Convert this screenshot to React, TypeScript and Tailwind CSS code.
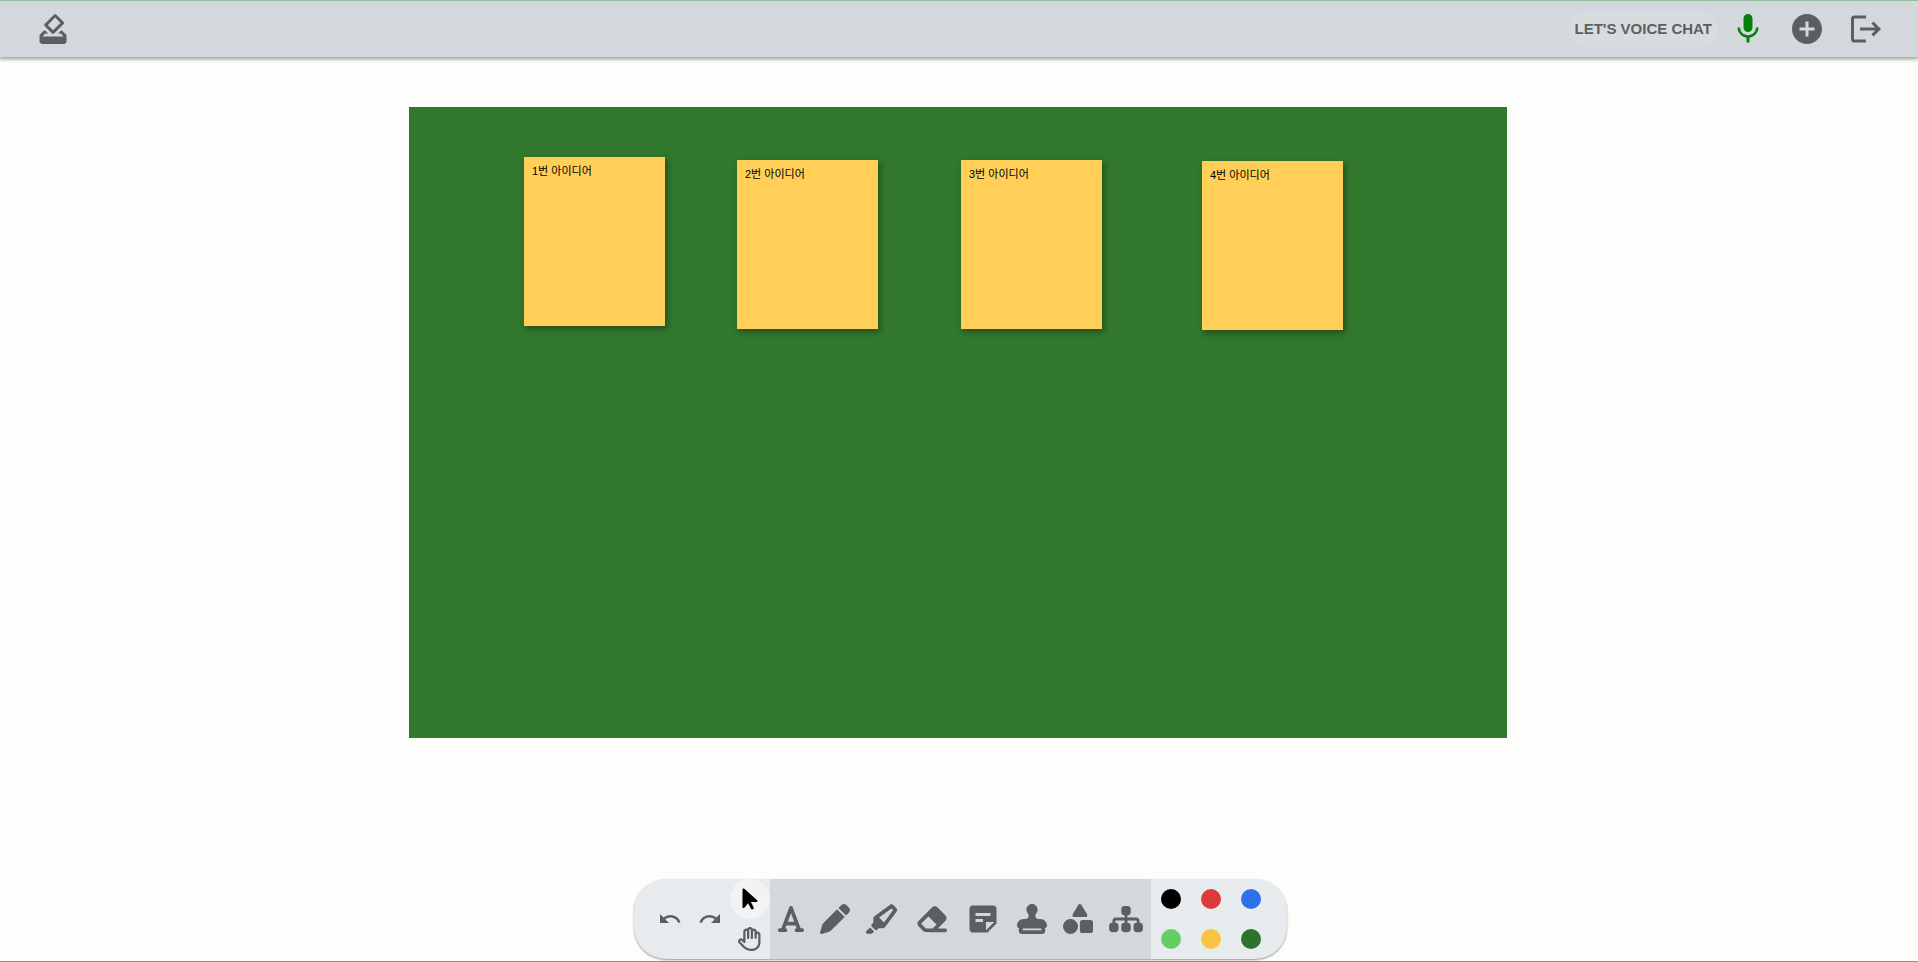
import { FaArrowPointer, FaEraser, FaFont, FaHighlighter, FaPen, FaRegHand, FaShapes, FaSitemap, FaStamp } from "react-icons/fa6";
import { MdAddCircle, MdHowToVote, MdLogout, MdMic, MdRedo, MdStickyNote2, MdUndo } from "react-icons/md";

const notes = [
  { text: "1번 아이디어", place: "left-[115px] top-[50px]" },
  { text: "2번 아이디어", place: "left-[328px] top-[53px]" },
  { text: "3번 아이디어", place: "left-[552px] top-[53px]" },
  { text: "4번 아이디어", place: "left-[793px] top-[54px]" },
];

const tools = [
  { label: "Text", Icon: FaFont, size: "h-[30px] w-[26px]" },
  { label: "Pen", Icon: FaPen, size: "h-[30px] w-[30px]" },
  { label: "Highlighter", Icon: FaHighlighter, size: "h-[30px] w-[33px]" },
  { label: "Eraser", Icon: FaEraser, size: "h-[30px] w-[34px]" },
  { label: "Sticky note", Icon: MdStickyNote2, size: "h-[36px] w-[36px]" },
  { label: "Stamp", Icon: FaStamp, size: "h-[30px] w-[30px]" },
  { label: "Shapes", Icon: FaShapes, size: "h-[30px] w-[30px]" },
  { label: "Mind map", Icon: FaSitemap, size: "h-[30px] w-[34px]" },
];

const colors = [
  { label: "Black", fill: "bg-black" },
  { label: "Red", fill: "bg-[#df3a3a]" },
  { label: "Blue", fill: "bg-[#2f6fea]" },
  { label: "Light green", fill: "bg-[#65cd65]" },
  { label: "Yellow", fill: "bg-[#f5c440]" },
  { label: "Green", fill: "bg-[#2b752b]" },
];

function Header() {
  return (
    <header className="flex h-[57px] shrink-0 items-center justify-between border-t border-[#8fbfa0] bg-[#d3d8dd] pr-[34px] pl-[35px] text-[#5c5f62] shadow-[0_1px_4px_1px_rgba(0,0,0,0.4)]">
      <button type="button" aria-label="Vote">
        <MdHowToVote className="size-9" />
      </button>
      <div className="flex items-center">
        <button type="button" className="mr-3 h-9 rounded-full bg-[#d8dcdf] px-[6px] text-[15px] font-bold">
          LET'S VOICE CHAT
        </button>
        <button type="button" aria-label="Microphone" className="mr-[23px] text-[#0a800a]">
          <MdMic className="size-9" />
        </button>
        <button type="button" aria-label="Add" className="mr-[23px]">
          <MdAddCircle className="size-9" />
        </button>
        <button type="button" aria-label="Leave">
          <MdLogout className="size-9" />
        </button>
      </div>
    </header>
  );
}

function Board() {
  return (
    <section className="relative h-[631px] w-[1098px] bg-[#31772c]">
      {notes.map((note) => (
        <article
          key={note.text}
          className={`absolute h-[169px] w-[141px] bg-[#ffcf58] px-2 py-[6px] text-[11px] leading-4 text-black shadow-[2px_3px_6px_rgba(0,0,0,0.35)] ${note.place}`}
        >
          {note.text}
        </article>
      ))}
    </section>
  );
}

function Toolbar() {
  return (
    <div className="absolute inset-x-0 bottom-0 flex justify-center border-b border-[#8d8f94] pb-[2px] pl-[3px]">
      <div className="flex h-20 overflow-hidden rounded-[32px] bg-[#e8ebed] text-[#5c5f62] shadow-[0_1px_2px_rgba(0,0,0,0.4)]">
        <div className="flex items-center pl-4">
          <button type="button" aria-label="Undo" className="flex size-10 items-center justify-center">
            <MdUndo className="size-6" />
          </button>
          <button type="button" aria-label="Redo" className="flex size-10 items-center justify-center">
            <MdRedo className="size-6" />
          </button>
          <div className="flex flex-col">
            <button type="button" aria-label="Select" className="flex size-10 items-center justify-center rounded-full bg-[#f1f3f4] text-black">
              <FaArrowPointer className="size-6" />
            </button>
            <button type="button" aria-label="Move" className="flex size-10 items-center justify-center">
              <FaRegHand className="size-6" />
            </button>
          </div>
        </div>
        <div className="flex items-center bg-[#d3d8dd]">
          {tools.map(({ label, Icon, size }) => (
            <button key={label} type="button" aria-label={label} className="px-2">
              <Icon className={size} />
            </button>
          ))}
        </div>
        <div className="grid grid-cols-3 pr-4">
          {colors.map(({ label, fill }) => (
            <button key={label} type="button" aria-label={label} className="flex size-10 items-center justify-center">
              <span className={`size-5 rounded-full ${fill}`} />
            </button>
          ))}
        </div>
      </div>
    </div>
  );
}

export default function App() {
  return (
    <div className="relative flex min-h-screen flex-col bg-[#fdfdfb] font-['Liberation_Sans','Noto_Sans_CJK_KR',sans-serif]">
      <Header />
      <main className="flex flex-1 items-start justify-center pt-[50px] pr-[2px] pb-24">
        <Board />
      </main>
      <Toolbar />
    </div>
  );
}
